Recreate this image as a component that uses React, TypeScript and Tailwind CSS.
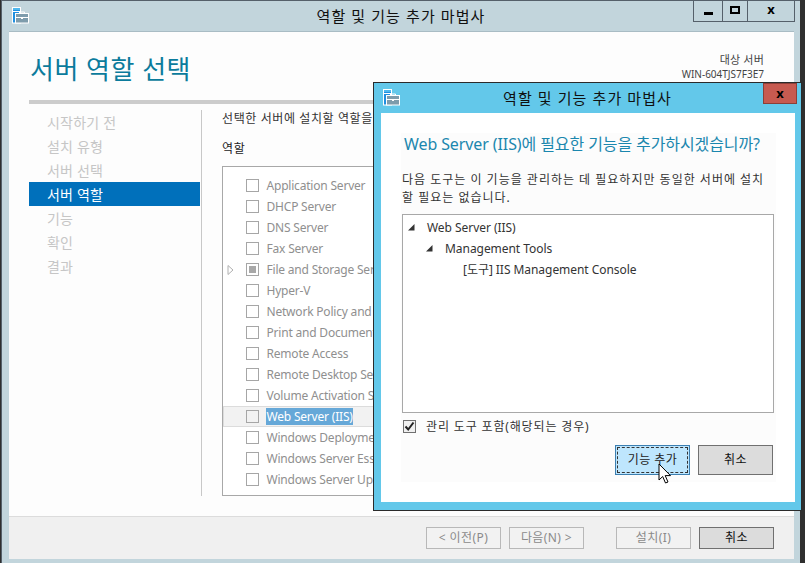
const fontStack = {
  fontFamily: '"Noto Sans", "Noto Sans CJK KR", sans-serif',
};

const steps = ["시작하기 전", "설치 유형", "서버 선택", "서버 역할", "기능", "확인", "결과"];

const roles = [
  { name: "Application Server" },
  { name: "DHCP Server" },
  { name: "DNS Server" },
  { name: "Fax Server" },
  { name: "File and Storage Services", partial: true },
  { name: "Hyper-V" },
  { name: "Network Policy and Access Services" },
  { name: "Print and Document Services" },
  { name: "Remote Access" },
  { name: "Remote Desktop Services" },
  { name: "Volume Activation Services" },
  { name: "Web Server (IIS)", selected: true },
  { name: "Windows Deployment Services" },
  { name: "Windows Server Essentials Experience" },
  { name: "Windows Server Update Services" },
];

function WizardIcon() {
  return (
    <svg width="17" height="17" viewBox="0 0 17 17" className="shrink-0">
      <rect x="0.5" y="0.5" width="8" height="15.5" fill="#1f8fe0" stroke="#ffffff" />
      <rect x="1" y="1" width="7" height="2" fill="#4fb8ee" />
      <rect x="1" y="4" width="7" height="1" fill="#ffffff" />
      <rect x="3.5" y="6.5" width="13" height="9.5" fill="#7e9cac" stroke="#ffffff" />
      <path d="M7.5 6.5V5h5v1.5" fill="none" stroke="#ffffff" />
      <path d="M4 10.5h12" stroke="#ffffff" />
      <rect x="9" y="10" width="2" height="2" fill="#ffffff" />
    </svg>
  );
}

function WizardButton({
  label,
  disabled,
  className = "",
}: {
  label: string;
  disabled?: boolean;
  className?: string;
}) {
  return (
    <div
      className={`flex h-[22px] w-[75px] items-center justify-center border text-[12px] tracking-[0.4px] ${
        disabled
          ? "border-[#b8b8b8] bg-[#f2f2f2] text-[#8a8a8a]"
          : "border-[#707070] bg-[#dcdcdc] text-[#111111]"
      } ${className}`}
    >
      {label}
    </div>
  );
}

function RoleRow({
  name,
  partial,
  selected,
}: {
  name: string;
  partial?: boolean;
  selected?: boolean;
}) {
  return (
    <div
      className={`relative flex h-[21px] items-center whitespace-nowrap pl-[23px] ${
        selected ? "bg-[#f2f2f2] shadow-[inset_0_0_0_1px_#dcdcdc]" : ""
      }`}
    >
      {partial && (
        <svg width="7" height="10" viewBox="0 0 7 10" className="absolute left-[4px] top-[6px]">
          <path d="M1 0.5L6 5L1 9.5Z" fill="none" stroke="#b0b0b0" />
        </svg>
      )}
      <div className="flex h-[13px] w-[13px] shrink-0 items-center justify-center border border-[#a6a6a6]">
        {partial && <div className="h-[7px] w-[7px] bg-[#a8a8a8]" />}
      </div>
      <span
        className={`ml-[7px] px-[0.5px] text-[12px] leading-[17px] tracking-[-0.2px] ${
          selected ? "bg-[#66a8d8] text-white" : "text-[#8f8f8f]"
        }`}
      >
        {name}
      </span>
    </div>
  );
}

function TreeRow({ label, indent, arrow }: { label: string; indent: string; arrow?: boolean }) {
  return (
    <div className={`flex h-[21px] items-center whitespace-nowrap text-[12px] tracking-[-0.05px] text-[#333333] ${indent}`}>
      <span className="flex w-[19px] shrink-0 items-center">
        {arrow && (
          <svg width="7" height="7" viewBox="0 0 7 7">
            <path d="M0 6.5H6.5V0Z" fill="#333333" />
          </svg>
        )}
      </span>
      {label}
    </div>
  );
}

function AddFeaturesDialog() {
  return (
    <div className="absolute left-[373px] top-[82px] flex h-[429px] w-[429px] flex-col border border-[#2b2b2b] bg-[#63c8ea]">
      <div className="relative flex h-[30px] shrink-0 items-center justify-center">
        <div className="absolute left-[9px] top-[6px]">
          <WizardIcon />
        </div>
        <span className="text-[15px] tracking-[1.1px] text-[#101010]">역할 및 기능 추가 마법사</span>
        <div className="absolute right-[4px] top-0 flex h-[21px] w-[34px] items-center justify-center border border-[#8c3f38] bg-[#c75a50] text-[13px] font-bold leading-none text-black">
          x
        </div>
      </div>
      <div className="ml-[7px] mr-[6px] h-[389px] bg-white px-[20px] pt-[20px]">
        <div className="flex h-[349px] w-[375px] flex-col bg-[#fcfcfc] pl-[1px]">
          <h2 className="h-[29px] whitespace-nowrap pl-[2px] pt-[1px] text-[16px] leading-[20px] tracking-[-0.1px] text-[#1b87ae]">
            Web Server (IIS)에 필요한 기능을 추가하시겠습니까?
          </h2>
          <p className="mt-[9px] h-[36px] w-[364px] text-[12px] leading-[18px] tracking-[1px] text-[#333333]">
            다음 도구는 이 기능을 관리하는 데 필요하지만 동일한 서버에 설치할 필요는 없습니다.
          </p>
          <div className="mt-[7px] h-[199px] w-[372px] border border-[#a8a8a8] bg-white pl-[5px] pt-[2px]">
            <TreeRow label="Web Server (IIS)" indent="" arrow />
            <TreeRow label="Management Tools" indent="pl-[18px]" arrow />
            <TreeRow label="[도구] IIS Management Console" indent="pl-[36px]" />
          </div>
          <div className="mt-[6px] flex h-[15px] items-center pl-[1px]">
            <div className="flex h-[13px] w-[13px] items-center justify-center border border-[#707070] bg-[#f0f0f0]">
              <svg width="11" height="11" viewBox="0 0 11 11">
                <path d="M1.5 5.5L4.2 8.5L9.5 1.5" fill="none" stroke="#222222" strokeWidth="2" />
              </svg>
            </div>
            <span className="ml-[10px] text-[12px] tracking-[0.85px] text-[#333333]">관리 도구 포함(해당되는 경우)</span>
          </div>
          <div className="mt-[11px] flex justify-end gap-[8px] pr-[3px]">
            <div className="flex h-[30px] w-[75px] items-center justify-center border border-[#3c7fb1] bg-[#bee6fd] text-[12px] tracking-[0.4px] text-[#222222] outline-1 -outline-offset-3 outline-dashed outline-[#333333]">
              기능 추가
            </div>
            <div className="flex h-[30px] w-[75px] items-center justify-center border border-[#707070] bg-[#dcdcdc] text-[12px] tracking-[0.4px] text-[#111111]">
              취소
            </div>
          </div>
        </div>
      </div>
    </div>
  );
}

export default function App() {
  return (
    <div className="relative h-[563px] w-[805px] overflow-hidden bg-[#2f2f2f]" style={fontStack}>
      <div className="ml-[1px] flex h-[563px] w-[799px] flex-col border-l border-t border-[#55606a] bg-[#c2d5dc]">
        <div className="relative flex h-[30px] shrink-0 items-center justify-center">
          <div className="absolute left-[10px] top-[6px]">
            <WizardIcon />
          </div>
          <span className="text-[15px] tracking-[1.1px] text-[#101010]">역할 및 기능 추가 마법사</span>
          <div className="absolute right-[5px] top-[-1px] flex h-[22px] border border-t-0 border-[#55606a] text-black">
            <div className="flex w-[28px] items-end justify-center pb-[6px]">
              <div className="h-[3px] w-[9px] bg-black" />
            </div>
            <div className="flex w-[26px] items-center justify-center border-x border-[#55606a]">
              <div className="mb-[2px] h-[8px] w-[10px] border-2 border-black" />
            </div>
            <div className="flex w-[46px] items-center justify-center pb-[3px] text-[13px] font-bold leading-none">
              x
            </div>
          </div>
        </div>

        <div className="ml-[7px] mr-[6px] flex h-[528px] flex-col border-t border-[#a9bcc4] bg-[#fdfdfd]">
          <div className="flex h-[68px] shrink-0 items-start justify-between pl-[21px] pr-[30px]">
            <h1 className="mt-[19px] whitespace-nowrap text-[26px] leading-[36px] tracking-[0.5px] text-[#0b7b9c]">
              서버 역할 선택
            </h1>
            <div className="mt-[21px] text-right text-[10px] leading-[14px] text-[#444444]">
              <div className="text-[11px] tracking-[0.2px]">대상 서버</div>
              <div>WIN-604TJS7F3E7</div>
            </div>
          </div>
          <div className="ml-[20px] mr-[20px] h-[4px] shrink-0 bg-[#cccccc]" />
          <div className="flex h-[386px] pl-[20px] pt-[6px]">
            <div className="w-[172px] shrink-0">
              {steps.map((step, i) => (
                <div
                  key={step}
                  className={`flex h-[24px] items-center pl-[18px] text-[14px] tracking-[0.2px] ${
                    i === 3 ? "w-[171px] bg-[#0070bb] text-white" : "text-[#c6c6c6]"
                  }`}
                >
                  {step}
                </div>
              ))}
            </div>
            <div className="h-[386px] w-[1px] shrink-0 bg-[#c8c8c8]" />
            <div className="w-[550px] pl-[20px]">
              <p className="h-[20px] whitespace-nowrap text-[12px] leading-[18px] tracking-[0.6px] text-[#333333]">
                선택한 서버에 설치할 역할을 하나 이상 선택하세요.
              </p>
              <div className="mt-[10px] text-[12px] leading-[18px] tracking-[0.6px] text-[#222222]">역할</div>
              <div className="mt-[8px] h-[330px] w-[250px] overflow-hidden border border-[#a8a8a8] bg-white pt-[8px]">
                {roles.map((role) => (
                  <RoleRow key={role.name} {...role} />
                ))}
              </div>
            </div>
          </div>
          <div className="mt-[26px] flex h-[43px] shrink-0 items-start justify-end border-t border-[#dcdcdc] bg-[#f0f0f0] pr-[20px] pt-[10px]">
            <WizardButton label="< 이전(P)" disabled />
            <WizardButton label="다음(N) >" disabled className="ml-[8px]" />
            <WizardButton label="설치(I)" disabled className="ml-[32px]" />
            <WizardButton label="취소" className="ml-[8px]" />
          </div>
        </div>
      </div>

      <AddFeaturesDialog />

      <svg width="14" height="22" viewBox="0 0 14 22" className="absolute left-[658px] top-[463px]">
        <path
          d="M1 1V17L4.7 13.5L7.5 20L10 19L7.2 12.6H12.5Z"
          fill="#ffffff"
          stroke="#000000"
          strokeWidth="1"
        />
      </svg>
    </div>
  );
}
